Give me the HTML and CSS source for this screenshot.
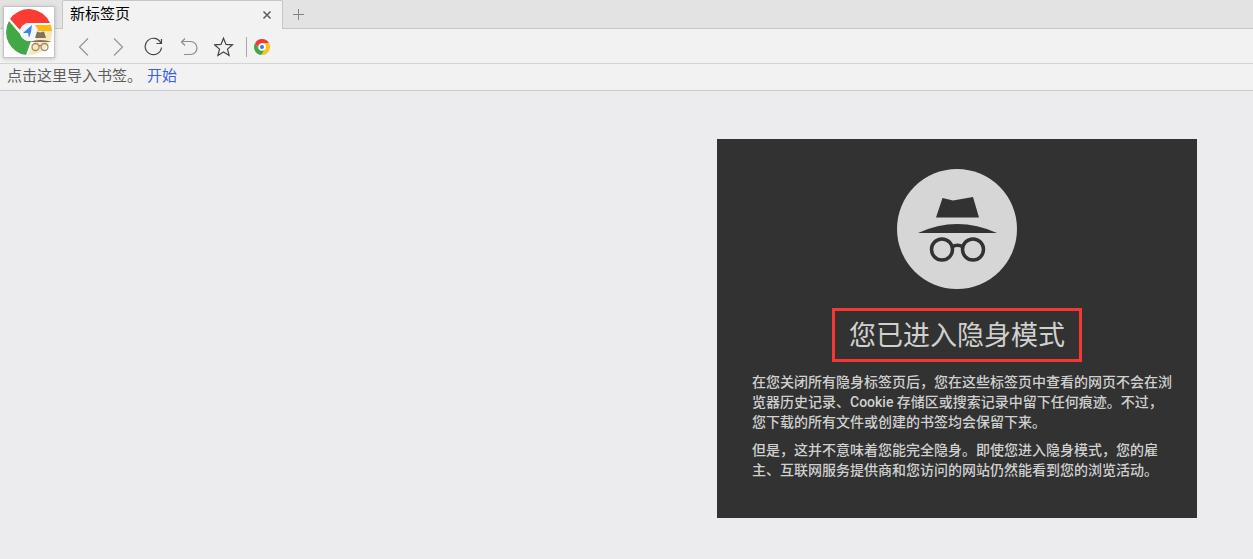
FILE: index.html
```
<!DOCTYPE html>
<html lang="zh-CN">
	<head>
		<meta charset="UTF-8">
		<title>新标签页</title>
		<link rel="stylesheet" href="styles.css">
	</head>
	<body>
		<header class="browser">
			<button class="logo" type="button" aria-label="菜单">
				<svg width="50" height="50" viewBox="0 0 50 50">
					<path d="M6 12A23 23 0 0 1 46 16H25A9 9 0 0 0 16 23Z" fill="#fb3c33"/>
					<path d="M5 14A23 23 0 0 0 22 48L27 34A10 10 0 0 1 16 27Z" fill="#43a745"/>
					<path d="M29 18H47A23 23 0 0 1 24 48L32 32Z" fill="#fbe6bb"/>
					<path d="M29 18H47L48 24H33Z" fill="#fdb916"/>
					<circle cx="25" cy="25" r="9" fill="#f5f8fc"/>
					<path d="M28 18L19 26H24L25 31L27 25Z" fill="#3f82ec"/>
					<path d="M31 31L33 24.500L36 25.500L40 24.500L42 31Z" fill="#81715f"/>
					<path d="M25 35Q36 31 48 35Z" fill="#81715f"/>
					<g fill="none" stroke="#9c8a70" stroke-width="1.300">
						<circle cx="31.500" cy="40" r="3.500"/>
						<circle cx="40.500" cy="40" r="3.500"/>
						<path d="M35 39Q36 38 37 39"/>
					</g>
				</svg>
			</button>
			<div class="tabs">
				<div class="tab">
					<span>新标签页</span>
					<button class="close" type="button" aria-label="关闭标签页">
						<svg width="10" height="10" viewBox="0 0 10 10"><path d="M1.500 1.500L8.500 8.500M8.500 1.500L1.500 8.500" stroke="#606060" stroke-width="1.600"/></svg>
					</button>
				</div>
				<button class="add" type="button" aria-label="新建标签页">
					<svg width="12" height="12" viewBox="0 0 12 12"><path d="M6.500 1V12M1 6.500H12" stroke="#848484"/></svg>
				</button>
			</div>
			<nav class="toolbar">
				<button type="button" aria-label="后退">
					<svg width="20" height="20" viewBox="0 0 20 20"><path d="M14 1.500L5.500 10L14 18.500" stroke="#959595" stroke-width="1.200"/></svg>
				</button>
				<button type="button" aria-label="前进">
					<svg width="20" height="20" viewBox="0 0 20 20"><path d="M5 1.500L13.500 10L5 18.500" stroke="#959595" stroke-width="1.200"/></svg>
				</button>
				<button type="button" aria-label="刷新">
					<svg width="20" height="20" viewBox="0 0 20 20"><path d="M16.800 6A8.200 8.200 0 1 0 17.500 10.500M17.500 2V6.500H12.500" stroke="#444" stroke-width="1.200"/></svg>
				</button>
				<button type="button" aria-label="撤销">
					<svg width="20" height="20" viewBox="0 0 20 20"><path d="M6 1.500L2.500 5L6 8.500M2.500 4.500H11.500A6.500 6.500 0 0 1 11.500 17.500H5" stroke="#8c8c8c" stroke-width="1.200"/></svg>
				</button>
				<button type="button" aria-label="收藏">
					<svg width="20" height="20" viewBox="0 0 20 20"><path d="M9.500 1.200L12 7.400L18.500 7.800L13.500 12.100L15.100 18.500L9.500 15L3.900 18.500L5.500 12.100L.5 7.800L7 7.400Z" stroke="#444" stroke-width="1.200"/></svg>
				</button>
				<div class="address">
					<svg width="16" height="16" viewBox="0 0 16 16">
						<path d="M1.100 4A8 8 0 0 1 15 4.200H8L4.600 10Z" fill="#f23b30"/>
						<path d="M1.100 4A8 8 0 0 0 7.300 16L11.300 10H4.600Z" fill="#3fa748"/>
						<path d="M15 4.200A8 8 0 0 1 7.300 16L11.300 10L11.500 6L8 4.200Z" fill="#fcc21b"/>
						<circle cx="8" cy="8" r="3.800" fill="#fff"/>
						<circle cx="8" cy="8" r="2" fill="#3d7be3"/>
					</svg>
				</div>
			</nav>
			<div class="bookmarks">
				<span>点击这里导入书签。</span>
				<a href="#">开始</a>
			</div>
		</header>
		<main class="content">
			<section class="card">
				<svg class="spy" width="120" height="120" viewBox="0 0 120 120">
					<circle cx="60" cy="60" r="60" fill="#d6d6d6"/>
					<path d="M39 48.500L45.500 29L56 31.500L76 28L82 48.500Z" fill="#323232"/>
					<path d="M21 64Q60 46 100 64Z" fill="#323232"/>
					<g fill="none" stroke="#323232" stroke-width="3.500">
						<circle cx="45" cy="80.500" r="10.500"/>
						<circle cx="76" cy="80.500" r="10.500"/>
						<path d="M55 78Q60.500 74.500 66 78"/>
					</g>
				</svg>
				<h1>您已进入隐身模式</h1>
				<div class="text">
					<p>在您关闭所有隐身标签页后，您在这些标签页中查看的网页不会在浏览器历史记录、Cookie 存储区或搜索记录中留下任何痕迹。不过，您下载的所有文件或创建的书签均会保留下来。</p>
					<p>但是，这并不意味着您能完全隐身。即使您进入隐身模式，您的雇主、互联网服务提供商和您访问的网站仍然能看到您的浏览活动。</p>
				</div>
			</section>
		</main>
	</body>
</html>
```
FILE: styles.css
```
*{
	margin: 0;
	padding: 0;
	box-sizing: border-box;
}
body{
	background: #ececee;
	font-family: "Liberation Sans","Noto Sans CJK SC",sans-serif;
	font-size: 15px;
	line-height: 24px;
	color: #000;
}
button{
	border: none;
	background: none;
}
svg{
	display: block;
	fill: none;
}
.browser{
	position: relative;
	background: #f2f2f2;
}
/* 浏览器图标，盖在标签栏和工具栏上面 */
.logo{
	position: absolute;
	left: 3px;
	top: 6px;
	background: #fff;
	border: 1px solid #c4c4c4;
	box-shadow: 0 1px 4px rgba(0,0,0,0.2);
}
.tabs{
	display: flex;
	height: 29px;
	padding-left: 62px;
	background: #e3e3e3;
	border-bottom: 1px solid #c6c6c6;
}
.tab{
	display: flex;
	align-items: center;
	justify-content: space-between;
	width: 221px;
	height: 29px;
	padding: 0 10px 2px 7px;
	background: #f2f2f2;
	border: 1px solid #c6c6c6;
	border-bottom: none;
	border-radius: 2px 2px 0 0;
}
.close{
	padding-top: 2px;
}
.add{
	padding: 0 9px;
}
.toolbar{
	display: flex;
	align-items: center;
	gap: 15px;
	height: 35px;
	padding: 2px 0 0 74px;
	border-bottom: 1px solid #d4d4d4;
}
.address{
	height: 20px;
	margin-left: -3px;
	padding: 2px 7px;
	border-left: 1px solid #a8a8a8;
}
.bookmarks{
	display: flex;
	align-items: center;
	gap: 5px;
	height: 27px;
	padding: 0 7px 2px;
	color: #5c5c5c;
	border-bottom: 1px solid #cbcbcb;
}
.bookmarks a{
	color: #3c62d9;
	text-decoration: none;
}
.content{
	display: flex;
	justify-content: flex-end;
	padding: 48px 56px 41px;
}
.card{
	display: flex;
	flex-direction: column;
	align-items: center;
	width: 480px;
	padding: 30px 24px 38px 24px;
	background: #323232;
	color: #d0d0d0;
}
.card h1{
	margin-top: 19px;
	padding: 2px 14px 0;
	border: 3px solid #f73734;
	font-size: 27px;
	font-weight: normal;
	line-height: 46px;
}
.text{
	margin-top: 10px;
	padding-left: 11px;
	font-family: Roboto,"Noto Sans CJK SC",sans-serif;
	font-size: 14px;
	font-weight: 500;
	line-height: 20px;
}
.text p+p{
	margin-top: 8px;
}
```
